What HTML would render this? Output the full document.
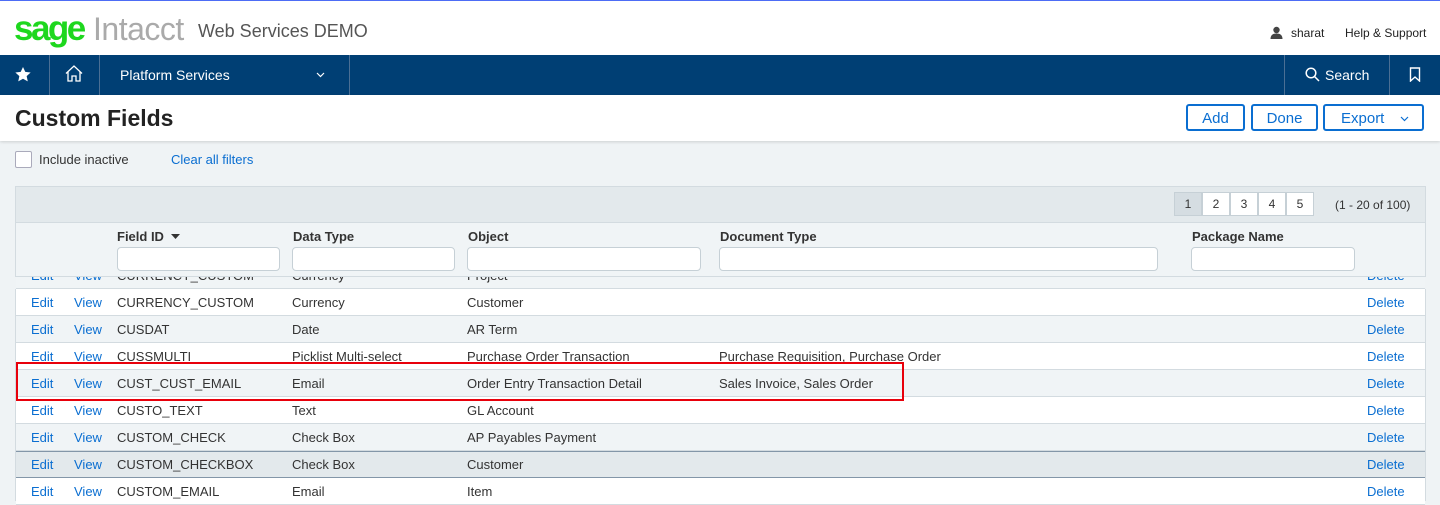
<!DOCTYPE html>
<html><head><meta charset="utf-8"><style>
*{box-sizing:border-box;margin:0;padding:0}
body{width:1440px;height:501px;overflow:hidden;background:#eff3f5;font-family:"Liberation Sans",Arial,sans-serif;position:relative;color:#333}
.a{position:absolute;white-space:nowrap}
.lnk{color:#0a6ed1}
.inp{position:absolute;height:24px;top:247px;background:#fff;border:1px solid #c6d0d6;border-radius:4px}
.row{position:absolute;left:16px;width:1409px;height:27px;border-bottom:1px solid #d3dbe0;font-size:13px}
.row span{position:absolute;top:6px}
.btn{position:absolute;top:104px;height:27px;border:2px solid #0a6ed1;border-radius:3px;color:#0a6ed1;font-size:15px;text-align:center;line-height:25px;background:#fff}
.pg{position:absolute;top:192px;width:28px;height:24px;border:1px solid #c6d0d6;background:#fff;font-size:12px;text-align:center;line-height:22px;color:#333}
</style></head><body>
<div class="a" style="left:0;top:0;width:1440px;height:1px;background:#4d6cf5"></div>
<div class="a" style="left:0;top:1px;width:1440px;height:54px;background:#fff"></div>
<div class="a" style="left:14px;top:9px;font-size:35px;font-weight:bold;color:#1ed71e;letter-spacing:-2.5px">sage</div>
<div class="a" style="left:93px;top:11px;font-size:32px;color:#aaa;letter-spacing:-0.5px">Intacct</div>
<div class="a" style="left:198px;top:21px;font-size:18px;color:#555">Web Services DEMO</div>
<svg class="a" style="left:1270px;top:26px" width="13" height="13" viewBox="0 0 13 13"><circle cx="6.5" cy="4" r="3.2" fill="#444"/><path d="M0.5 13c0-4 2.5-5.5 6-5.5s6 1.5 6 5.5z" fill="#444"/></svg>
<div class="a" style="left:1291px;top:26px;font-size:12px;color:#222">sharat</div>
<div class="a" style="left:1345px;top:26px;font-size:12px;color:#222">Help &amp; Support</div>
<div class="a" style="left:0;top:55px;width:1440px;height:40px;background:#003f74"></div>
<div class="a" style="left:49px;top:55px;width:1px;height:40px;background:#4a6f94"></div>
<div class="a" style="left:99px;top:55px;width:1px;height:40px;background:#4a6f94"></div>
<div class="a" style="left:349px;top:55px;width:1px;height:40px;background:#4a6f94"></div>
<div class="a" style="left:1284px;top:55px;width:1px;height:40px;background:#4a6f94"></div>
<div class="a" style="left:1389px;top:55px;width:1px;height:40px;background:#4a6f94"></div>
<svg class="a" style="left:15px;top:67px" width="16" height="15" viewBox="0 0 24 23"><path d="M12 0l3.5 7.5 8.2.9-6.1 5.6 1.7 8.1L12 18l-7.3 4.1 1.7-8.1L.3 8.4l8.2-.9z" fill="#fff"/></svg>
<svg class="a" style="left:65px;top:65px" width="18" height="17" viewBox="0 0 18 17" fill="none" stroke="#fff" stroke-width="1.3"><path d="M1 8.5L9 1l8 7.5M3 7v9h4v-5h4v5h4V7"/></svg>
<div class="a" style="left:120px;top:67px;font-size:14px;color:#fff">Platform Services</div>
<svg class="a" style="left:316px;top:72px" width="9" height="6"><path d="M1 1l3.5 3.5L8 1" stroke="#fff" fill="none" stroke-width="1.2"/></svg>
<svg class="a" style="left:1305px;top:67px" width="15" height="15" fill="none" stroke="#fff" stroke-width="1.5"><circle cx="6" cy="6" r="4.8"/><path d="M9.5 9.5L14 14"/></svg>
<div class="a" style="left:1325px;top:67px;font-size:14px;color:#fff">Search</div>
<svg class="a" style="left:1409px;top:67px" width="12" height="15" fill="none" stroke="#fff" stroke-width="1.4"><path d="M1.5 1h9v13L6 10l-4.5 4z"/></svg>
<div class="a" style="left:0;top:95px;width:1440px;height:46px;background:#fff;box-shadow:0 1px 3px rgba(0,0,0,.15)"></div>
<div class="a" style="left:15px;top:105px;font-size:23px;font-weight:bold;color:#222">Custom Fields</div>
<div class="btn" style="left:1186px;width:59px">Add</div>
<div class="btn" style="left:1251px;width:67px">Done</div>
<div class="btn" style="left:1323px;width:101px;text-align:left;padding-left:16px">Export</div>
<svg class="a" style="left:1400px;top:116px" width="9" height="6"><path d="M1 1l3.5 3.5L8 1" stroke="#0a6ed1" fill="none" stroke-width="1.2"/></svg>
<div class="a" style="left:15px;top:151px;width:17px;height:17px;border:1px solid #aab;background:#fff;border-radius:2px"></div>
<div class="a" style="left:39px;top:152px;font-size:13px">Include inactive</div>
<div class="a lnk" style="left:171px;top:152px;font-size:13px">Clear all filters</div>
<div class="a" style="left:15px;top:186px;width:1411px;height:37px;background:#e3e9ec;border:1px solid #d3dbe0"></div>
<div class="pg" style="left:1174px;background:#d5dde2">1</div>
<div class="pg" style="left:1202px">2</div>
<div class="pg" style="left:1230px">3</div>
<div class="pg" style="left:1258px">4</div>
<div class="pg" style="left:1286px">5</div>
<div class="a" style="left:1335px;top:198px;font-size:12px">(1 - 20 of 100)</div>

<div class="row" style="top:262px;background:#f0f4f6"><span class="lnk" style="left:15px">Edit</span><span class="lnk" style="left:58px">View</span><span style="left:101px">CURRENCY_CUSTOM</span><span style="left:276px">Currency</span><span style="left:451px">Project</span><span class="lnk" style="left:1351px">Delete</span></div>
<div class="a" style="left:15px;top:223px;width:1411px;height:54px;background:#f0f4f6;border-left:1px solid #d3dbe0;border-right:1px solid #d3dbe0;border-bottom:1px solid #d3dbe0"></div>
<div class="a" style="left:117px;top:229px;font-size:13px;font-weight:bold;color:#333">Field ID</div>
<svg class="a" style="left:171px;top:234px" width="9" height="5"><path d="M0 0h9L4.5 5z" fill="#333"/></svg>
<div class="a" style="left:293px;top:229px;font-size:13px;font-weight:bold">Data Type</div>
<div class="a" style="left:468px;top:229px;font-size:13px;font-weight:bold">Object</div>
<div class="a" style="left:720px;top:229px;font-size:13px;font-weight:bold">Document Type</div>
<div class="a" style="left:1192px;top:229px;font-size:13px;font-weight:bold">Package Name</div>
<div class="inp" style="left:117px;width:163px"></div>
<div class="inp" style="left:292px;width:163px"></div>
<div class="inp" style="left:467px;width:234px"></div>
<div class="inp" style="left:719px;width:439px"></div>
<div class="inp" style="left:1191px;width:164px"></div>

<div class="row" style="top:289px;background:#fff"><span class="lnk" style="left:15px">Edit</span><span class="lnk" style="left:58px">View</span><span style="left:101px">CURRENCY_CUSTOM</span><span style="left:276px">Currency</span><span style="left:451px">Customer</span><span class="lnk" style="left:1351px">Delete</span></div>
<div class="row" style="top:316px;background:#f0f4f6"><span class="lnk" style="left:15px">Edit</span><span class="lnk" style="left:58px">View</span><span style="left:101px">CUSDAT</span><span style="left:276px">Date</span><span style="left:451px">AR Term</span><span class="lnk" style="left:1351px">Delete</span></div>
<div class="row" style="top:343px;background:#fff"><span class="lnk" style="left:15px">Edit</span><span class="lnk" style="left:58px">View</span><span style="left:101px">CUSSMULTI</span><span style="left:276px">Picklist Multi-select</span><span style="left:451px">Purchase Order Transaction</span><span style="left:703px">Purchase Requisition, Purchase Order</span><span class="lnk" style="left:1351px">Delete</span></div>
<div class="row" style="top:370px;background:#f0f4f6"><span class="lnk" style="left:15px">Edit</span><span class="lnk" style="left:58px">View</span><span style="left:101px">CUST_CUST_EMAIL</span><span style="left:276px">Email</span><span style="left:451px">Order Entry Transaction Detail</span><span style="left:703px">Sales Invoice, Sales Order</span><span class="lnk" style="left:1351px">Delete</span></div>
<div class="row" style="top:397px;background:#fff"><span class="lnk" style="left:15px">Edit</span><span class="lnk" style="left:58px">View</span><span style="left:101px">CUSTO_TEXT</span><span style="left:276px">Text</span><span style="left:451px">GL Account</span><span class="lnk" style="left:1351px">Delete</span></div>
<div class="row" style="top:424px;background:#f0f4f6"><span class="lnk" style="left:15px">Edit</span><span class="lnk" style="left:58px">View</span><span style="left:101px">CUSTOM_CHECK</span><span style="left:276px">Check Box</span><span style="left:451px">AP Payables Payment</span><span class="lnk" style="left:1351px">Delete</span></div>
<div class="row" style="top:451px;background:#e3e9ec;border:1px solid #8396a8;left:15px;width:1411px"><span class="lnk" style="left:15px;top:5px">Edit</span><span class="lnk" style="left:58px;top:5px">View</span><span style="left:101px;top:5px">CUSTOM_CHECKBOX</span><span style="left:276px;top:5px">Check Box</span><span style="left:451px;top:5px">Customer</span><span class="lnk" style="left:1351px;top:5px">Delete</span></div>
<div class="row" style="top:478px;background:#fff"><span class="lnk" style="left:15px">Edit</span><span class="lnk" style="left:58px">View</span><span style="left:101px">CUSTOM_EMAIL</span><span style="left:276px">Email</span><span style="left:451px">Item</span><span class="lnk" style="left:1351px">Delete</span></div>
<div class="a" style="left:15px;top:289px;width:1px;height:212px;background:#d3dbe0"></div>
<div class="a" style="left:1425px;top:289px;width:1px;height:212px;background:#d3dbe0"></div>

<div class="a" style="left:16px;top:362px;width:888px;height:39px;border:2px solid #e8000b"></div>
</body></html>
